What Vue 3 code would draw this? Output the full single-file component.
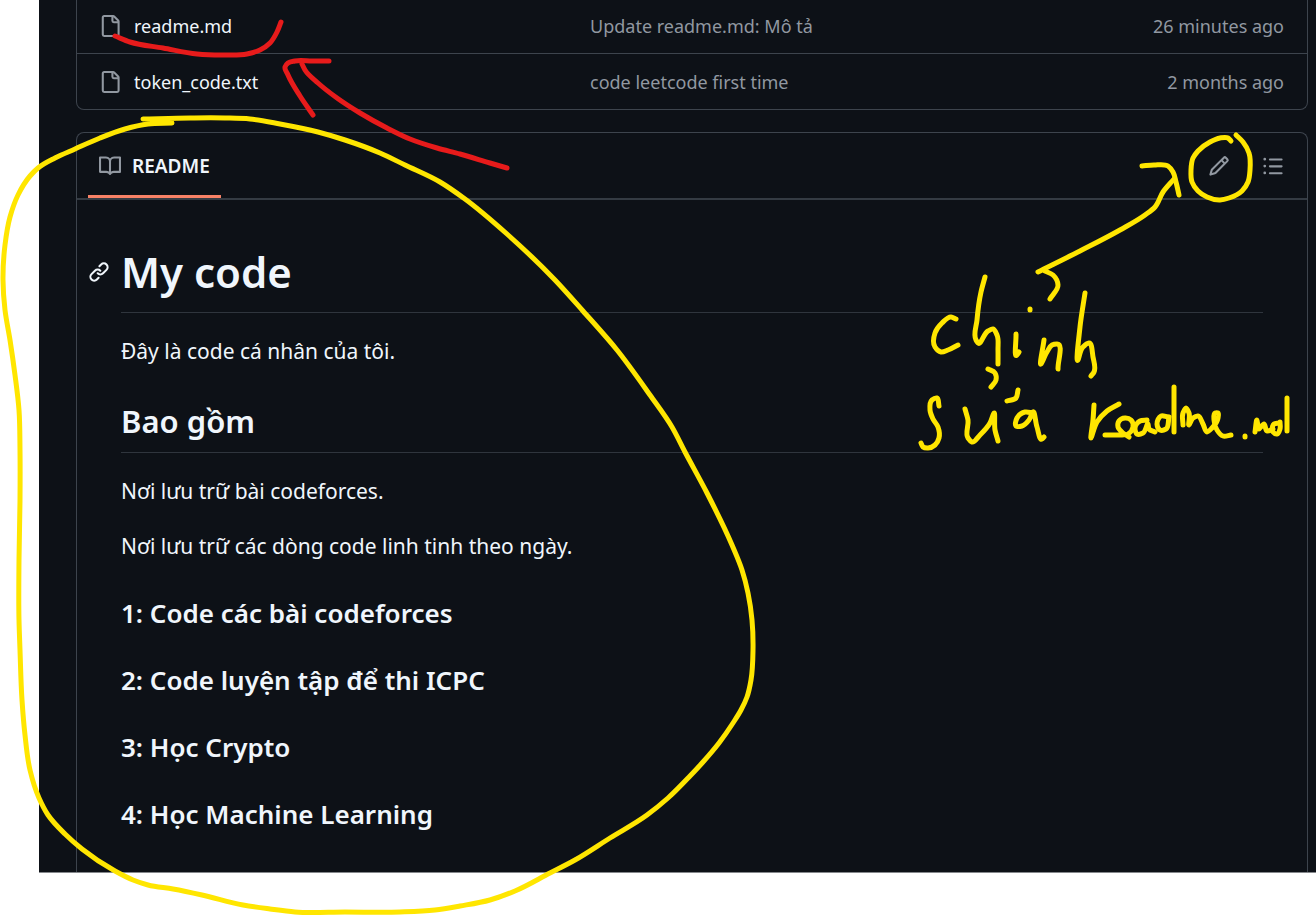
<script setup>
const files = [
  { name: 'readme.md', message: 'Update readme.md: Mô tả', time: '26 minutes ago' },
  { name: 'token_code.txt', message: 'code leetcode first time', time: '2 months ago' },
]

const topics = [
  '1: Code các bài codeforces',
  '2: Code luyện tập để thi ICPC',
  '3: Học Crypto',
  '4: Học Machine Learning',
]

// Pen strokes, each a list of "x,y" points joined by a smooth curve.
const redStrokes = [
  '115,36 130,42 163,48 197,54 223,55 247,54 260,50 270,43 277,32 281,22',
  '329,61 312,61 295,61 288,63 285,67 288,75 300,96 313,115',
  '302,64 305,70 318,83 337,98 360,113 387,128 410,139 437,148 460,154 490,163 507,168',
]

const yellowStrokes = [
  '172,123 148,124 125,129 100,138 75,149 55,158 38,168 30,176 18,195 10,217 5,245 3,280 5,310 10,340 15,375 19,410 20,450 20,500 19,560 19,620 20,650 22,700 25,735 30,770 39,798 48,815 65,834 82,849 115,871 133,880 148,885 173,889 202,895 243,905 270,909 295,912 345,912 400,912 435,910 460,906 490,900 515,891 550,873 575,860 610,838 647,815 668,798 690,776 703,762 719,743 733,723 741,710 747,697 751,680 753,650 752,620 748,593 742,570 732,545 707,493 685,452 672,427 650,395 617,350 583,311 555,280 507,234 465,199 440,182 405,165 380,153 345,140 318,132 280,124 250,119 225,118 190,118 143,119',
  '1231,141 1228,138 1220,138 1210,142 1198,151 1193,158 1191,170 1192,182 1198,191 1207,197 1220,200 1229,198 1242,191 1248,182 1250,170 1249,153 1243,142 1236,135',
  '1142,166 1154,165 1168,166 1173,172 1176,182 1179,195',
  '1174,179 1163,192 1155,207 1145,215 1120,230 1080,251 1038,272',
  '956,319 951,317 942,323 935,333 935,347 941,352 948,350 958,345',
  '985,277 981,292 977,320 976,340 978,343 988,331 993,329 997,335 998,350 998,364',
  '1045,271 1053,275 1058,285 1050,299',
  '1030,309 1030,310',
  '1016,334 1017,355 1019,352',
  '1044,340 1041,364 1047,352 1052,345 1057,344 1058,369',
  '1085,293 1080,327 1078,360 1083,347 1089,343 1093,357 1094,372 1091,376',
  '988,369 995,373 996,380 991,387',
  '1018,390 1016,398 1007,401',
  '939,406 937,398 932,400 930,410 933,419 938,427 939,438 935,445 928,448 923,447 921,443',
  '965,409 968,420 968,438 972,442 980,435 990,423 994,413 995,430 998,441',
  '1033,413 1025,412 1017,418 1016,426 1022,426 1029,420 1033,412 1037,427 1042,439 1044,437',
  '1094,405 1093,420 1091,438 1097,422 1107,411 1119,404',
  '1105,435 1118,435 1128,434 1133,427 1131,420 1125,418 1119,421 1118,427 1123,433 1129,437',
  '1147,420 1140,421 1135,428 1137,434 1143,433 1148,424 1149,429 1155,432',
  '1168,417 1161,416 1157,424 1160,430 1166,429 1169,417',
  '1174,387 1174,432',
  '1183,425 1183,413 1186,408 1189,413 1189,425 1193,418 1198,416 1203,424 1207,432 1212,428 1218,418 1218,413 1215,413 1214,420 1217,430 1223,436 1231,435',
  '1245,436 1245,437',
  '1255,432 1257,420 1259,429 1264,424 1267,431 1273,429',
  '1279,423 1274,424 1273,432 1277,434 1280,429 1280,422',
  '1287,398 1287,431',
]

// Tangents are weighted by the distance between points, so that closely
// spaced points do not make the curve overshoot.
function smooth(stroke) {
  const p = stroke.split(' ').map((s) => s.split(',').map(Number))
  const gap = (a, b) => Math.hypot(b[0] - a[0], b[1] - a[1])
  const tangents = p.map((b, i) => {
    const a = p[i - 1]
    const c = p[i + 1]
    if (!a || !c) {
      const from = a || b
      const to = c || b
      const length = gap(from, to)
      return [(to[0] - from[0]) / length, (to[1] - from[1]) / length]
    }
    const before = gap(a, b)
    const after = gap(b, c)
    return [0, 1].map(
      (k) => (((b[k] - a[k]) / before) * after + ((c[k] - b[k]) / after) * before) / (before + after),
    )
  })
  let d = `M${p[0]}`
  for (let i = 0; i < p.length - 1; i++) {
    const third = gap(p[i], p[i + 1]) / 3
    const start = p[i].map((v, k) => v + tangents[i][k] * third)
    const end = p[i + 1].map((v, k) => v - tangents[i + 1][k] * third)
    d += `C${start} ${end} ${p[i + 1]}`
  }
  return d
}
</script>

<template>
  <div class="page">
    <main class="repo">
      <table class="files" aria-label="Files">
        <tbody>
          <tr v-for="file in files" :key="file.name">
            <td class="name">
              <div class="entry">
                <svg class="icon" viewBox="0 0 16 16" aria-hidden="true">
                  <path d="M2 1.75C2 .784 2.784 0 3.75 0h6.586c.464 0 .909.184 1.237.513l2.914 2.914c.329.328.513.773.513 1.237v9.586A1.75 1.75 0 0 1 13.25 16h-9.5A1.75 1.75 0 0 1 2 14.25Zm1.75-.25a.25.25 0 0 0-.25.25v12.5c0 .138.112.25.25.25h9.5a.25.25 0 0 0 .25-.25V6h-2.75A1.75 1.75 0 0 1 9 4.25V1.5Zm6.75.062V4.25c0 .138.112.25.25.25h2.688l-.011-.013-2.914-2.914-.013-.011Z" />
                </svg>
                <a href="#">{{ file.name }}</a>
              </div>
            </td>
            <td class="message"><a href="#">{{ file.message }}</a></td>
            <td class="time">{{ file.time }}</td>
          </tr>
        </tbody>
      </table>

      <section class="readme">
        <header class="bar">
          <a class="tab" href="#">
            <svg class="icon" viewBox="0 0 16 16" aria-hidden="true">
              <path d="M0 1.75A.75.75 0 0 1 .75 1h4.253c1.227 0 2.317.59 3 1.501A3.743 3.743 0 0 1 11.006 1h4.245a.75.75 0 0 1 .75.75v10.5a.75.75 0 0 1-.75.75h-4.507a2.25 2.25 0 0 0-1.591.659l-.622.621a.75.75 0 0 1-1.06 0l-.622-.621A2.25 2.25 0 0 0 5.258 13H.75a.75.75 0 0 1-.75-.75Zm7.251 10.324.004-5.073-.002-2.253A2.25 2.25 0 0 0 5.003 2.5H1.5v9h3.757a3.75 3.75 0 0 1 1.994.574ZM8.755 4.75l-.004 7.322a3.752 3.752 0 0 1 1.992-.572H14.5v-9h-3.495a2.25 2.25 0 0 0-2.25 2.25Z" />
            </svg>
            <span>README</span>
          </a>
          <div class="actions">
            <button type="button" aria-label="Edit file">
              <svg class="icon" viewBox="0 0 16 16" aria-hidden="true">
                <path d="M11.013 1.427a1.75 1.75 0 0 1 2.474 0l1.086 1.086a1.75 1.75 0 0 1 0 2.474l-8.61 8.61c-.21.21-.47.364-.756.445l-3.251.93a.75.75 0 0 1-.927-.928l.929-3.25c.081-.286.235-.547.445-.758l8.61-8.61Zm.176 4.823L9.75 4.81l-6.286 6.287a.253.253 0 0 0-.064.108l-.558 1.953 1.953-.558a.253.253 0 0 0 .108-.064Zm1.238-3.763a.25.25 0 0 0-.354 0L10.811 3.75l1.439 1.44 1.263-1.263a.25.25 0 0 0 0-.354Z" />
              </svg>
            </button>
            <button type="button" aria-label="Outline">
              <svg class="icon" viewBox="0 0 16 16" aria-hidden="true">
                <path d="M5.75 2.5h8.5a.75.75 0 0 1 0 1.5h-8.5a.75.75 0 0 1 0-1.5Zm0 5h8.5a.75.75 0 0 1 0 1.5h-8.5a.75.75 0 0 1 0-1.5Zm0 5h8.5a.75.75 0 0 1 0 1.5h-8.5a.75.75 0 0 1 0-1.5ZM2 14a1 1 0 1 1 0-2 1 1 0 0 1 0 2Zm1-6a1 1 0 1 1-2 0 1 1 0 0 1 2 0ZM2 4a1 1 0 1 1 0-2 1 1 0 0 1 0 2Z" />
              </svg>
            </button>
          </div>
        </header>

        <article class="content">
          <div class="heading">
            <a class="anchor" href="#" aria-label="Permalink: My code">
              <svg class="icon" viewBox="0 0 16 16" aria-hidden="true">
                <path d="m7.775 3.275 1.25-1.25a3.5 3.5 0 1 1 4.95 4.95l-2.5 2.5a3.5 3.5 0 0 1-4.95 0 .751.751 0 0 1 .018-1.042.751.751 0 0 1 1.042-.018 1.998 1.998 0 0 0 2.83 0l2.5-2.5a2.002 2.002 0 0 0-2.83-2.83l-1.25 1.25a.751.751 0 0 1-1.042-.018.751.751 0 0 1-.018-1.042Zm-4.69 9.64a1.998 1.998 0 0 0 2.83 0l1.25-1.25a.751.751 0 0 1 1.042.018.751.751 0 0 1 .018 1.042l-1.25 1.25a3.5 3.5 0 1 1-4.95-4.95l2.5-2.5a3.5 3.5 0 0 1 4.95 0 .751.751 0 0 1-.018 1.042.751.751 0 0 1-1.042.018 1.998 1.998 0 0 0-2.83 0l-2.5 2.5a1.998 1.998 0 0 0 0 2.83Z" />
              </svg>
            </a>
            <h1>My code</h1>
          </div>
          <p>Đây là code cá nhân của tôi.</p>
          <h2>Bao gồm</h2>
          <p>Nơi lưu trữ bài codeforces.</p>
          <p>Nơi lưu trữ các dòng code linh tinh theo ngày.</p>
          <h3 v-for="topic in topics" :key="topic">{{ topic }}</h3>
        </article>
      </section>
    </main>

    <svg class="ink" viewBox="0 0 1316 916" role="img" aria-label="chỉnh sửa readme.md">
      <path v-for="stroke in yellowStrokes" :key="stroke" class="yellow" :d="smooth(stroke)" />
      <path v-for="stroke in redStrokes" :key="stroke" class="red" :d="smooth(stroke)" />
    </svg>
  </div>
</template>

<style>
body {
  margin: 0;
  background: #fff;
}
</style>

<style scoped>
.page {
  position: relative;
  padding: 0 0 43px 39px;
  font-family: "Noto Sans", "Open Sans", sans-serif;
  color: #f0f6fc;
}

.repo {
  padding: 0 8px 0 37px;
  background: #0d1117;
  border-bottom: 1px solid #85888c;
}

a {
  color: inherit;
  text-decoration: none;
}

.icon {
  display: block;
  width: 22px;
  height: 22px;
  flex: none;
  fill: #9198a1;
}

.files {
  width: 100%;
  table-layout: fixed;
  border: 1px solid #3d444d;
  border-top: 0;
  border-radius: 0 0 8px 8px;
  border-spacing: 0;
  font-size: 18px;
  line-height: 24px;
}

.files td {
  height: 55px;
  padding: 0;
  color: #9198a1;
}

.files tr:first-child td {
  height: 51px;
  padding-bottom: 2px;
  border-bottom: 1px solid #3d444d;
}

.files td.name {
  width: 513px;
  color: #f0f6fc;
}

.entry {
  display: flex;
  align-items: center;
  gap: 13px;
  padding-left: 22px;
}

.files td.time {
  width: 260px;
  padding-right: 23px;
  text-align: right;
}

.readme {
  margin-top: 22px;
  border: 1px solid #3d444d;
  border-bottom: 0;
  border-radius: 8px 8px 0 0;
}

.bar {
  display: flex;
  justify-content: space-between;
  height: 65px;
  padding: 0 23px 0 11px;
  border-bottom: 2px solid #343b43;
}

.tab {
  display: flex;
  align-items: center;
  gap: 11px;
  padding: 3px 11px 0;
  border-bottom: 3px solid #f78166;
  font-size: 19px;
  font-weight: 600;
}

.actions {
  display: flex;
  align-items: center;
  gap: 32px;
}

.actions button {
  padding: 0;
  border: 0;
  background: none;
}

.content {
  padding: 44px 44px 41px;
  font-size: 21px;
  line-height: 33px;
}

.heading {
  position: relative;
}

.anchor {
  position: absolute;
  top: 17px;
  left: -33px;
}

.anchor .icon {
  fill: #f0f6fc;
}

h1,
h2,
h3,
p {
  margin: 0 0 22px;
}

h1,
h2,
h3 {
  font-weight: 600;
}

h1 {
  padding-bottom: 13px;
  border-bottom: 1px solid #2f353d;
  font-size: 42px;
  line-height: 55px;
}

h2 {
  margin-top: 33px;
  padding-bottom: 10px;
  border-bottom: 1px solid #2f353d;
  font-size: 31px;
  line-height: 41px;
}

h3 {
  margin-top: 33px;
  font-size: 26px;
  line-height: 34px;
}

h3:last-child {
  margin-bottom: 0;
}

.ink {
  position: absolute;
  top: 0;
  left: 0;
  width: 1316px;
  height: 916px;
  pointer-events: none;
}

.ink path {
  fill: none;
  stroke-width: 5;
  stroke-linecap: round;
  stroke-linejoin: round;
}

.ink .yellow {
  stroke: #ffe600;
}

.ink .red {
  stroke: #e71b1b;
}
</style>
